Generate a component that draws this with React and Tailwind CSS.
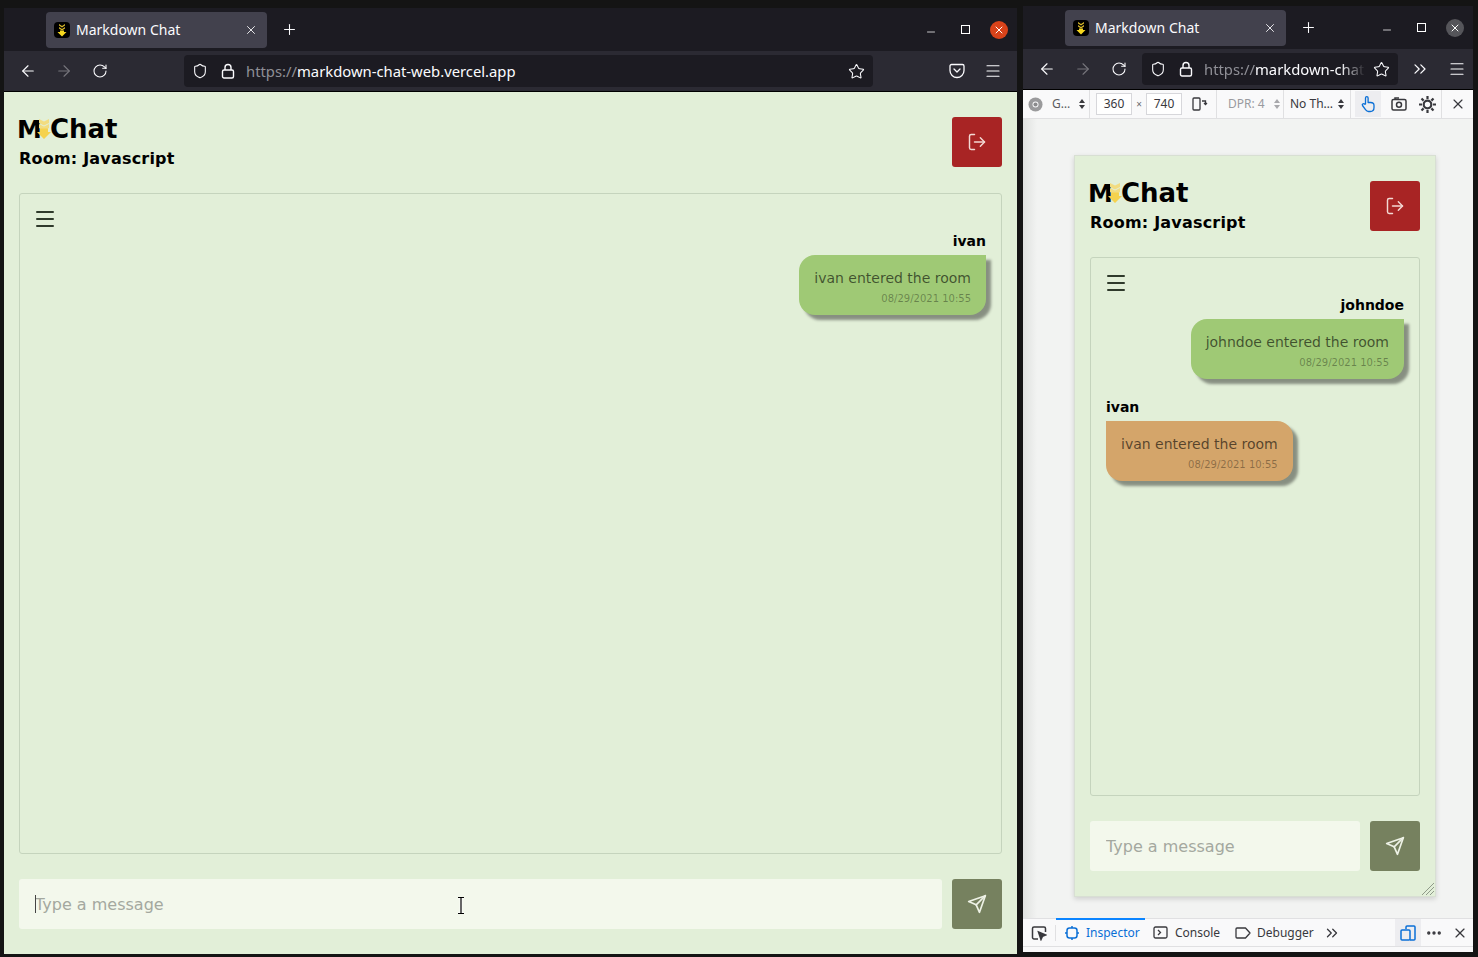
import {
  ArrowLeft,
  ArrowRight,
  ChevronsRight,
  Ellipsis,
  LogOut,
  Menu,
  Minus,
  Plus,
  RotateCw,
  Shield,
  Star,
  X,
} from 'lucide-react';

const CHROME_FONT = 'font-["Noto_Sans",sans-serif]';
const PAGE_FONT = 'font-["DejaVu_Sans",sans-serif]';

function Favicon() {
  return (
    <svg width="16" height="16" viewBox="0 0 16 16" className="shrink-0">
      <rect width="16" height="16" rx="4" fill="#000" />
      <path d="M5 2l3 2 3-2v1.600L8 5.600 5 3.600zM5 5l3 2 3-2v1.600L8 8.600 5 6.600z" fill="#d9b92a" />
      <path d="M6 8.500h4V10h2.500L8 14.500 3.500 10H6z" fill="#f6d71e" />
    </svg>
  );
}

function LogoArrow() {
  return (
    <svg width="14" height="22" viewBox="0 0 14 22" className="shrink-0">
      <path d="M2 1l5 2.500L12 1v4L7 7.500 2 5zM2 6l5 2.500L12 6v4l-5 2.500L2 10z" fill="#f2dc80" />
      <path d="M3 10.500h8V14h3l-7 7-7-7h3z" fill="#f5d24e" />
    </svg>
  );
}

function PlaneIcon() {
  return (
    <svg width="20" height="20" viewBox="0 0 24 24" fill="none" stroke="currentColor" strokeWidth="2" strokeLinejoin="round" strokeLinecap="round">
      <path d="M22 2L11 13" />
      <path d="M22 2l-7 20-4-9-9-4z" />
    </svg>
  );
}

function Pocket() {
  return (
    <svg width="16" height="16" viewBox="0 0 16 16" fill="none" stroke="#fbfbfe" strokeWidth="1.300" strokeLinecap="round" strokeLinejoin="round">
      <path d="M2.500 1.500h11a1.500 1.500 0 0 1 1.500 1.500v4.500a7 7 0 0 1-14 0V3a1.500 1.500 0 0 1 1.500-1.500z" />
      <path d="M5 6l3 3 3-3" />
    </svg>
  );
}

function GearIcon() {
  return (
    <svg width="17" height="17" viewBox="0 0 17 17" fill="none" stroke="#38383d" className="shrink-0">
      <circle cx="8.500" cy="8.500" r="3.800" strokeWidth="2.200" />
      <path d="M8.500 0v3M8.500 14v3M0 8.500h3M14 8.500h3M2.500 2.500l2.100 2.100M12.400 12.400l2.100 2.100M14.500 2.500l-2.100 2.100M4.600 12.400l-2.100 2.100" strokeWidth="2.200" />
    </svg>
  );
}

function Slot({ className = 'w-[36px]', children }) {
  return <div className={`flex h-full shrink-0 items-center justify-center ${className}`}>{children}</div>;
}

function TabStrip({ closeClass, className }) {
  return (
    <div className={`flex shrink-0 items-center bg-[#1c1b22] pl-[42px] ${className}`}>
      <div className="flex h-[36px] w-[221px] shrink-0 items-center rounded-[4px] bg-[#42414d] pl-[8px] pr-[9px]">
        <Favicon />
        <span className="ml-[6px] flex-1 truncate text-[14px] text-[#fbfbfe]">Markdown Chat</span>
        <X size={14} strokeWidth={1.500} className="text-[#fbfbfe]" />
      </div>
      <Slot className="ml-[4px] w-[36px]"><Plus size={17} strokeWidth={1.500} className="text-[#fbfbfe]" /></Slot>
      <div className="flex-1" />
      <Slot className="w-[34px]"><Minus size={12} strokeWidth={1.500} className="translate-y-[2px] text-white" /></Slot>
      <Slot className="w-[34px]"><div className="h-[9px] w-[9px] border border-white" /></Slot>
      <Slot className="w-[34px]">
        <div className={`flex h-[18px] w-[18px] items-center justify-center rounded-full ${closeClass}`}>
          <X size={12} strokeWidth={2} className="text-white" />
        </div>
      </Slot>
    </div>
  );
}

function ChatPage({ messages, caret }) {
  return (
    <div className={`flex h-full flex-col bg-[#e2efd8] px-[15px] pb-[25px] pt-[25px] ${PAGE_FONT}`}>
      <div className="flex h-[50px] items-start justify-between">
        <div className="-mt-[1px]">
          <div className="flex h-[26px] items-center text-[26px] font-bold leading-none text-black">
            <span className="-ml-[2px] text-[25px]">M</span>
            <span className="relative -ml-[5px]"><LogoArrow /></span>
            <span className="-ml-[1px]">Chat</span>
          </div>
          <h1 className="mt-[7px] text-[16px] font-bold leading-[20px] tracking-[0.2px] text-black">Room: Javascript</h1>
        </div>
        <button className="flex h-[50px] w-[50px] items-center justify-center rounded-[3px] bg-[#a82424] text-[#f3d9d4]">
          <LogOut size={20} strokeWidth={1.750} />
        </button>
      </div>

      <div className="mt-[26px] min-h-0 flex-1 rounded-[3px] border border-[#c5d4bd] px-[15px] pt-[13px]">
        <Menu size={24} strokeWidth={2} className="-ml-[2px] text-[#2f3a2b]" />
        <div className="mt-[2px] flex flex-col gap-[20px]">
          {messages.map((m) => (
            <div key={m.name} className={`flex flex-col ${m.mine ? 'items-end' : 'items-start'}`}>
              <span className="h-[22px] text-[14px] font-bold leading-[16px] text-black">{m.name}</span>
              <div className={`h-[60px] px-[15px] pt-[14px] shadow-[5px_5px_3px_rgba(0,0,0,0.4)] ${m.mine ? 'rounded-[16px] rounded-tr-none bg-[#9fc975]' : 'rounded-[16px] rounded-tl-none bg-[#d4a56a]'}`}>
                <p className="text-[14px] leading-[18px] text-black/60">{m.text}</p>
                <p className="mt-[5px] text-right text-[10px] leading-[14px] text-black/35">08/29/2021 10:55</p>
              </div>
            </div>
          ))}
        </div>
      </div>

      <div className="mt-[25px] flex gap-[10px]">
        <div className="relative h-[50px] min-w-0 flex-1">
          <input
            readOnly
            placeholder="Type a message"
            className="h-full w-full rounded-[3px] bg-[#f3f8ec] px-[16px] text-[16px] outline-none placeholder:text-[#a4a89f]"
          />
          {caret && <span className="absolute left-[16px] top-[16px] h-[18px] w-px bg-[#444]" />}
          {caret && (
            <svg width="8" height="17" viewBox="0 0 8 17" className="absolute left-[438px] top-[18px]" fill="none">
              <path d="M1 .500h6M1 16.500h6M4 .500v16" stroke="#fff" strokeWidth="2.500" />
              <path d="M1 .500h6M1 16.500h6M4 .500v16" stroke="#000" strokeWidth="1.200" />
            </svg>
          )}
        </div>
        <button className="flex h-[50px] w-[50px] shrink-0 items-center justify-center rounded-[3px] bg-[#76815f] text-[#eef2e6]">
          <PlaneIcon />
        </button>
      </div>
    </div>
  );
}

function UpDown({ className = 'text-[#3a3a3d]' }) {
  return (
    <svg width="6" height="10" viewBox="0 0 6 10" className={`shrink-0 ${className}`} fill="currentColor">
      <path d="M3 0l3 4H0zM3 10L0 6h6z" />
    </svg>
  );
}

function SizeBox({ children }) {
  return (
    <div className="flex h-[22px] w-[36px] items-center justify-center border border-[#d7d7db] bg-white text-[12px] text-[#38383d]">
      {children}
    </div>
  );
}

function RdmBar() {
  return (
    <div className="flex h-[29px] shrink-0 items-center border-b border-[#e0e0e2] bg-[#f9f9fa] text-[12px] text-[#38383d]">
      <div className="flex h-full w-[67px] items-center border-r border-[#e0e0e2] pl-[5px]">
        <svg width="15" height="15" viewBox="0 0 16 16" className="shrink-0">
          <circle cx="8" cy="8" r="7.500" fill="#9a9a9c" />
          <circle cx="8" cy="8" r="3.200" fill="#f9f9fa" />
          <circle cx="8" cy="8" r="2.200" fill="#8a8a8c" />
        </svg>
        <span className="ml-[9px] text-[#5b5b60]">G…</span>
        <UpDown className="ml-[9px] text-[#3a3a3d]" />
      </div>
      <div className="flex h-full w-[127px] items-center border-r border-[#e0e0e2] pl-[6px]">
        <SizeBox>360</SizeBox>
        <span className="w-[14px] text-center text-[10px] text-[#6b6b70]">×</span>
        <SizeBox>740</SizeBox>
        <svg width="16" height="14" viewBox="0 0 16 14" className="ml-[10px] shrink-0" fill="none" stroke="#38383d" strokeWidth="1.300">
          <rect x="1" y="1" width="7" height="12" rx="1" />
          <path d="M10 4h3.500v3M12 6l1.500 1.500L15 6" />
        </svg>
      </div>
      <div className="flex h-full w-[67px] items-center border-r border-[#e0e0e2] pl-[11px] text-[#9a9a9f]">
        <span>DPR: 4</span>
        <UpDown className="ml-[9px] text-[#a8a8ac]" />
      </div>
      <div className="flex h-full w-[67px] items-center border-r border-[#e0e0e2] pl-[6px]">
        <span>No Th…</span>
        <UpDown className="ml-[5px]" />
      </div>
      <div className="flex h-full w-[91px] items-center border-r border-[#e0e0e2] pl-[4px]">
        <div className="flex h-[26px] w-[26px] shrink-0 items-center justify-center bg-[#ededf0]">
          <svg width="14" height="18" viewBox="0 0 14 18" fill="none" stroke="#0a6fd6" strokeWidth="1.300" strokeLinejoin="round">
            <path d="M4.500 9V3a1.300 1.300 0 0 1 2.600 0v4.500h2.500c2 0 3.400.8 3.400 3v2c0 2.500-1.500 4-3.800 4H7.500c-1.300 0-2.200-.7-3-1.800L1.500 10.500c-.8-1.200.8-2.400 1.800-1.500z" />
          </svg>
        </div>
        <svg width="16" height="14" viewBox="0 0 16 14" className="ml-[10px] shrink-0" fill="none" stroke="#38383d" strokeWidth="1.500">
          <rect x="1" y="2.500" width="14" height="10.500" rx="1.500" />
          <circle cx="8" cy="7.700" r="2.500" />
          <path d="M4 2.500V1h4" />
        </svg>
        <span className="ml-[12px]"><GearIcon /></span>
      </div>
      <div className="flex flex-1 items-center justify-center">
        <X size={16} strokeWidth={1.750} className="text-[#38383d]" />
      </div>
    </div>
  );
}

function DevtoolsBar() {
  return (
    <div className="flex h-[29px] shrink-0 items-center border-b border-t border-[#e0e0e2] bg-[#f9f9fa] text-[12px] text-[#38383d]">
      <div className="flex w-[33px] shrink-0 items-center justify-center border-r border-[#e0e0e2]">
        <svg width="16" height="16" viewBox="0 0 16 16" fill="none" stroke="#38383d" strokeWidth="1.500">
          <path d="M7 14H3a1.500 1.500 0 0 1-1.500-1.500v-9A1.500 1.500 0 0 1 3 2h10a1.500 1.500 0 0 1 1.500 1.500V7" />
          <path d="M7.500 7l7 3-3 1.200L10 14.500z" fill="#38383d" />
        </svg>
      </div>
      <div className="relative flex h-full w-[89px] shrink-0 items-center pl-[9px] text-[#0a6fd6]">
        <span className="absolute left-0 right-0 -top-px h-[2px] bg-[#0a84ff]" />
        <svg width="14" height="14" viewBox="0 0 14 14" fill="none" stroke="#0a6fd6" strokeWidth="1.500" className="shrink-0">
          <rect x="2" y="2" width="10" height="10" rx="2.500" />
          <path d="M7 0v2M7 12v2M0 7h2M12 7h2" />
        </svg>
        <span className="ml-[7px]">Inspector</span>
      </div>
      <div className="flex w-[84px] shrink-0 items-center pl-[8px]">
        <svg width="15" height="13" viewBox="0 0 15 13" fill="none" stroke="#38383d" strokeWidth="1.300" className="shrink-0">
          <rect x="1" y="1" width="13" height="11" rx="1.500" />
          <path d="M5 4l2.500 2.500L5 9" />
        </svg>
        <span className="ml-[7px]">Console</span>
      </div>
      <div className="flex w-[94px] shrink-0 items-center pl-[6px]">
        <svg width="16" height="12" viewBox="0 0 16 12" fill="none" stroke="#38383d" strokeWidth="1.300" strokeLinejoin="round" className="shrink-0">
          <path d="M1 2a1 1 0 0 1 1-1h8.500L15 6l-4.500 5H2a1 1 0 0 1-1-1z" />
        </svg>
        <span className="ml-[6px]">Debugger</span>
      </div>
      <ChevronsRight size={18} strokeWidth={1.750} className="shrink-0 text-[#38383d]" />
      <div className="flex-1" />
      <div className="flex h-full w-[26px] items-center justify-center bg-[#ededf0]">
        <svg width="16" height="16" viewBox="0 0 16 16" fill="none" stroke="#0a6fd6" strokeWidth="1.500">
          <path d="M6 4V2a1 1 0 0 1 1-1h7a1 1 0 0 1 1 1v12a1 1 0 0 1-1 1H10" />
          <rect x="1" y="5" width="9" height="10" rx="1" />
        </svg>
      </div>
      <Ellipsis size={18} strokeWidth={2.500} className="ml-[4px] text-[#38383d]" />
      <X size={16} strokeWidth={1.750} className="ml-[9px] mr-[5px] text-[#38383d]" />
    </div>
  );
}

export default function App() {
  return (
    <div className={`flex h-[957px] w-[1478px] items-start gap-[6px] overflow-hidden bg-[#141414] pl-[4px] ${CHROME_FONT}`}>
      {/* wide window */}
      <div className="mt-[8px] flex h-[946px] w-[1013px] shrink-0 flex-col">
        <TabStrip className="h-[43px] pr-[1px]" closeClass="bg-[#d9431a]" />
        <div className="flex h-[41px] shrink-0 items-center border-b border-black bg-[#2b2a33] px-[6px]">
          <Slot><ArrowLeft size={18} strokeWidth={1.500} className="text-[#fbfbfe]" /></Slot>
          <Slot><ArrowRight size={18} strokeWidth={1.500} className="text-[#76757c]" /></Slot>
          <Slot><RotateCw size={16} strokeWidth={1.600} className="text-[#fbfbfe]" /></Slot>
          <div className="ml-[66px] flex h-[32px] flex-1 items-center rounded-[4px] bg-[#1c1b22] pl-[8px] pr-[8px]">
            <Shield size={16} strokeWidth={1.600} className="text-[#fbfbfe]" />
            <svg width="14" height="16" viewBox="0 0 14 16" className="ml-[13px]" fill="none" stroke="#fbfbfe" strokeWidth="1.400">
              <rect x="1.500" y="7" width="11" height="8" rx="1.500" />
              <path d="M4 7V4.500a3 3 0 0 1 6 0V7" />
            </svg>
            <span className="ml-[11px] flex-1 truncate text-[14.800px] text-[#8f8f96]">
              https://<span className="text-[#fbfbfe]">markdown-chat-web.vercel.app</span>
            </span>
            <Star size={17} strokeWidth={1.500} className="text-[#fbfbfe]" />
          </div>
          <Slot className="ml-[66px] w-[36px]"><Pocket /></Slot>
          <Slot><Menu size={18} strokeWidth={1.500} className="text-[#fbfbfe]" /></Slot>
        </div>
        <div className="min-h-0 flex-1">
          <ChatPage
            caret
            messages={[{ name: 'ivan', mine: true, text: 'ivan entered the room' }]}
          />
        </div>
      </div>

      {/* narrow window with responsive design mode */}
      <div className="mt-[6px] flex h-[946px] w-[450px] shrink-0 flex-col bg-[#f9f9fa]">
        <TabStrip className="h-[43px] pr-[1px]" closeClass="bg-[#55555a]" />
        <div className="flex h-[41px] shrink-0 items-center border-b border-black bg-[#2b2a33] px-[6px]">
          <Slot><ArrowLeft size={18} strokeWidth={1.500} className="text-[#fbfbfe]" /></Slot>
          <Slot><ArrowRight size={18} strokeWidth={1.500} className="text-[#76757c]" /></Slot>
          <Slot><RotateCw size={16} strokeWidth={1.600} className="text-[#fbfbfe]" /></Slot>
          <div className="ml-[5px] flex h-[32px] w-[256px] shrink-0 items-center rounded-[4px] bg-[#1c1b22] pl-[8px] pr-[8px]">
            <Shield size={16} strokeWidth={1.600} className="shrink-0 text-[#fbfbfe]" />
            <svg width="14" height="16" viewBox="0 0 14 16" className="ml-[13px] shrink-0" fill="none" stroke="#fbfbfe" strokeWidth="1.400">
              <rect x="1.500" y="7" width="11" height="8" rx="1.500" />
              <path d="M4 7V4.500a3 3 0 0 1 6 0V7" />
            </svg>
            <span className="ml-[11px] min-w-0 flex-1 truncate text-clip text-[14.800px] text-[#8f8f96] [mask-image:linear-gradient(90deg,#000_85%,transparent)]">
              https://<span className="text-[#fbfbfe]">markdown-chat</span>
            </span>
            <Star size={17} strokeWidth={1.500} className="ml-[8px] shrink-0 text-[#fbfbfe]" />
          </div>
          <Slot className="ml-[4px] w-[36px]"><ChevronsRight size={20} strokeWidth={1.500} className="text-[#fbfbfe]" /></Slot>
          <Slot className="ml-[2px] w-[33px]"><Menu size={18} strokeWidth={1.500} className="text-[#fbfbfe]" /></Slot>
        </div>
        <RdmBar />
        <div className="flex min-h-0 flex-1 justify-center bg-[linear-gradient(90deg,#dfe1df,#f2f3f2_14px)] pt-[36px]">
          <div className="relative ml-[14px] h-[742px] w-[362px] border border-[#d8dfd3] shadow-[0_2px_5px_rgba(0,0,0,0.15)]">
            <ChatPage
              messages={[
                { name: 'johndoe', mine: true, text: 'johndoe entered the room' },
                { name: 'ivan', mine: false, text: 'ivan entered the room' },
              ]}
            />
            <svg width="13" height="13" viewBox="0 0 13 13" className="absolute bottom-[1px] right-[1px]" stroke="#8f9a89" strokeWidth="1">
              <path d="M1 13L13 1M5 13l8-8M9 13l4-4" />
            </svg>
          </div>
        </div>
        <DevtoolsBar />
        <div className="h-[5px] shrink-0" />
      </div>
    </div>
  );
}
